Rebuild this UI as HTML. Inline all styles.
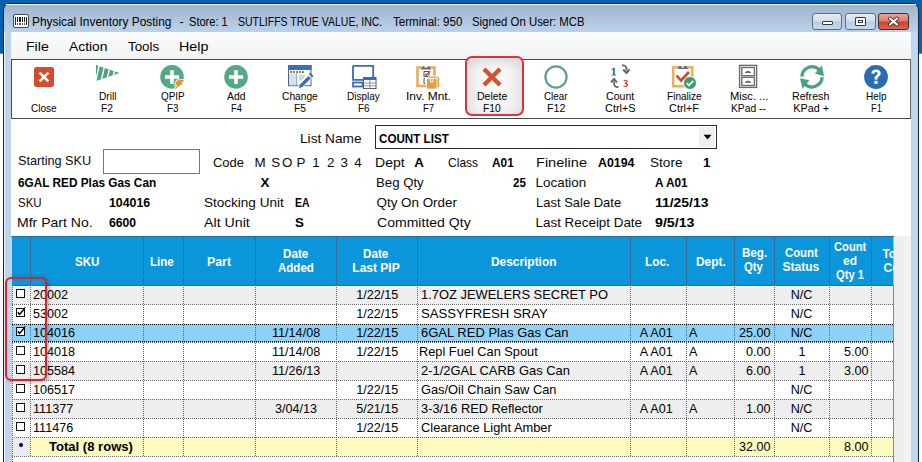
<!DOCTYPE html>
<html><head><meta charset="utf-8">
<style>
*{margin:0;padding:0;box-sizing:border-box}
html,body{width:922px;height:462px;overflow:hidden;background:#fff;font-family:"Liberation Sans",sans-serif;position:relative}
div,svg{position:absolute}
.t{white-space:pre;line-height:1;color:#000}
.cb{width:9px;height:9px;border:1px solid #111;background:#fff}
.vd{width:1px;background:repeating-linear-gradient(to bottom,#666 0 1px,transparent 1px 2px)}
.hd{height:1px;background:repeating-linear-gradient(to right,#666 0 1px,transparent 1px 2px)}
.hs{width:1px;top:237px;height:48px;background:#3b6d8c}
</style></head><body>
<!-- desktop -->
<div style="left:0;top:0;width:922px;height:54px;background:linear-gradient(to bottom,#0c5fac 0,#0c5fac 53px,#5f93c8 53px)"></div>
<!-- window frame -->
<div style="left:3px;top:3px;width:916px;height:470px;border:1px solid #1c2633;border-radius:7px 7px 0 0;background:linear-gradient(to bottom,#a2b5cc 0,#a9bfd8 10px,#b4cae3 20px,#bad1ea 28px,#bed3ea 60px,#bfd3ea 100%)"></div>
<div style="left:6px;top:4px;width:910px;height:1px;background:#eaf4f8"></div>
<div style="left:4px;top:32px;width:1px;height:440px;background:#eef4fb"></div>
<div style="left:911px;top:32px;width:7px;height:440px;background:linear-gradient(to right,#bcd2ea,#c2dcf2 60%,#9fd8f4)"></div>
<!-- title icon -->
<svg style="left:13px;top:14px" width="16" height="14" viewBox="0 0 16 14" shape-rendering="crispEdges">
 <rect x="0.5" y="0.5" width="15" height="13" rx="1.5" fill="#fff" stroke="#4a4a4a" stroke-width="1" shape-rendering="auto"/>
 <rect x="2" y="3" width="1" height="8" fill="#222"/>
 <rect x="4" y="3" width="1" height="5" fill="#222"/>
 <rect x="6" y="3" width="2" height="5" fill="#222"/>
 <rect x="9" y="3" width="1" height="5" fill="#222"/>
 <rect x="11" y="3" width="1" height="5" fill="#222"/>
 <rect x="13" y="3" width="1" height="8" fill="#222"/>
 <rect x="4" y="9" width="1" height="2" fill="#555"/>
 <rect x="6" y="9" width="2" height="2" fill="#555"/>
 <rect x="9" y="9" width="1" height="2" fill="#555"/>
 <rect x="11" y="9" width="1" height="2" fill="#555"/>
</svg>
<!-- caption buttons -->
<div style="left:812px;top:13px;width:30px;height:17px;border:1px solid #5e6e82;border-radius:3px;background:linear-gradient(to bottom,#e4ecf5 0,#d2dfed 45%,#b9cde2 55%,#c9d9ea 100%)"></div>
<div style="left:822px;top:21px;width:11px;height:4px;border:1px solid #303a46;background:#fff;border-radius:1px"></div>
<div style="left:845px;top:13px;width:31px;height:17px;border:1px solid #5e6e82;border-radius:3px;background:linear-gradient(to bottom,#e4ecf5 0,#d2dfed 45%,#b9cde2 55%,#c9d9ea 100%)"></div>
<div style="left:855px;top:17px;width:11px;height:9px;border:1px solid #303a46;background:#fff;border-radius:1px"></div>
<div style="left:858px;top:20px;width:5px;height:3px;border:1px solid #303a46"></div>
<div style="left:878px;top:13px;width:31px;height:17px;border:1px solid #4a2a24;border-radius:3px;background:linear-gradient(to bottom,#eba496 0,#de7d6c 45%,#c9452f 55%,#d66a52 100%)"></div>
<svg style="left:886px;top:15px" width="15" height="13" viewBox="0 0 15 13">
 <path d="M4 3.5L11 9.5M11 3.5L4 9.5" stroke="#4a2a22" stroke-width="3.8" stroke-linecap="round"/>
 <path d="M4 3.5L11 9.5M11 3.5L4 9.5" stroke="#fff" stroke-width="2.2" stroke-linecap="round"/>
</svg>
<!-- content -->
<div style="left:11px;top:32px;width:900px;height:440px;background:#fff"></div>
<!-- menubar -->
<div style="left:11px;top:32px;width:900px;height:27px;background:linear-gradient(to bottom,#fbfcfd 0,#f8f9fa 8px,#f3f3f4 100%)"></div>
<!-- toolbar -->
<div style="left:11px;top:59px;width:900px;height:60px;border:1px solid #4a4a4a;border-right-color:#6a6a6a;background:#fff"></div>
<!-- delete highlight -->
<div style="left:465px;top:56px;width:59px;height:60px;border:2px solid #e1303a;border-radius:7px;background:linear-gradient(to right,#e3e3e3 0,#f3f3f3 20%,#fafafa 50%,#f3f3f3 80%,#e2e2e2 100%)"></div>
<div style="left:467px;top:58px;width:55px;height:56px;border-radius:5px;background:linear-gradient(to bottom,rgba(195,195,195,.45) 0,rgba(255,255,255,0) 22%,rgba(255,255,255,0) 85%,rgba(210,210,210,.3) 100%)"></div>
<!-- Close -->
<svg style="left:32px;top:65px" width="24" height="24" viewBox="0 0 24 24">
 <rect x="2" y="2" width="20" height="20" rx="2.5" fill="#d74a2d"/>
 <path d="M7.6 7.6L16.4 16.4M16.4 7.6L7.6 16.4" stroke="#fff" stroke-width="2.6"/>
</svg>
<!-- Drill -->
<svg style="left:96px;top:64px" width="24" height="18" viewBox="0 0 24 18">
 <defs><clipPath id="dtri"><path d="M0 1L23.5 9L0 17z"/></clipPath></defs>
 <g clip-path="url(#dtri)">
  <rect x="0" y="0" width="24" height="18" fill="#4fa27f"/>
  <path d="M-0.5 18L3.5 0M5 18L9 0M10.5 18L14.5 0M16 18L20 0" stroke="#fff" stroke-width="1.5"/>
 </g>
</svg>
<!-- QPIP -->
<svg style="left:160px;top:65px" width="26" height="26" viewBox="0 0 26 26">
 <circle cx="12" cy="11.9" r="11.8" fill="#54a884"/>
 <path d="M5 12H19.2M12 5.2V18.9" stroke="#fff" stroke-width="3.6"/>
 <path d="M17 15.2L24.6 14.8L21 18L23.4 18L13.8 25L17.4 19.9L14.8 19.9z" fill="#fff" stroke="#fff" stroke-width="1.6" stroke-linejoin="round"/><path d="M17 15.2L24.6 14.8L21 18L23.4 18L13.8 25L17.4 19.9L14.8 19.9z" fill="#ea9428"/>
</svg>
<!-- Add -->
<svg style="left:224px;top:65px" width="24" height="24" viewBox="0 0 24 24">
 <circle cx="12" cy="11.9" r="11.8" fill="#54a884"/>
 <path d="M5 12H19.2M12 5.2V18.9" stroke="#fff" stroke-width="3.6"/>
</svg>
<!-- Change -->
<svg style="left:288px;top:64px" width="26" height="26" viewBox="0 0 26 26">
 <rect x="0.5" y="1.5" width="22.5" height="20.2" fill="#fff" stroke="#606060" stroke-width="1"/>
 <rect x="0" y="1" width="23.5" height="5" fill="#3d6fb5"/>
 <path d="M2 8h2M5 8h2M8 8h2M11 8h2M14 8h2" stroke="#555" stroke-width="1.3"/>
 <rect x="1" y="9.5" width="7.5" height="11.7" fill="#cde2f7"/>
 <path d="M8.7 9.5V21.2" stroke="#8a8a8a" stroke-width="0.8"/>
 <path d="M11 11.8h6M11 13.8h5M11 15.8h3" stroke="#9a9a9a" stroke-width="0.8"/>
 <path d="M10.2 24.6L11 20.9L20.3 11.6L23.2 14.5L13.9 23.8z" fill="#3d6fb5" stroke="#fff" stroke-width="0.9" stroke-linejoin="round"/>
 <path d="M21.3 9.9L22.2 9L25.1 11.9L24.2 12.8z" fill="#3d6fb5" stroke="#3d6fb5" stroke-width="1"/>
</svg>
<!-- Display -->
<svg style="left:352px;top:64px" width="26" height="26" viewBox="0 0 26 26">
 <path d="M1 1.8H21.2V13.5M11 15.8H1V1.8" fill="none" stroke="#3a6db3" stroke-width="1.8"/>
 <rect x="1" y="18.5" width="9.5" height="4" fill="none" stroke="#3a6db3" stroke-width="1.8"/>
 <rect x="11.5" y="13.5" width="12.5" height="11" fill="#fff" stroke="#5a5a5a" stroke-width="1"/>
 <rect x="11.5" y="13.5" width="12.5" height="2.5" fill="#3a6db3"/>
 <path d="M17.8 16V24.5M11.5 19h12.5M11.5 21.8h12.5" stroke="#8a8a8a" stroke-width="0.9"/>
</svg>
<!-- Inv Mnt -->
<svg style="left:414px;top:64px" width="28" height="26" viewBox="0 0 28 26">
 <rect x="3.5" y="3.5" width="17" height="18.5" fill="#fff" stroke="#e9ad5e" stroke-width="2.6"/>
 <path d="M7 5.5L8.5 2.5H15.5L17 5.5z" fill="#6b6b6b"/>
 <rect x="10.5" y="2" width="3" height="1.5" fill="#fff"/>
 <rect x="10" y="7.5" width="5" height="5" fill="none" stroke="#555" stroke-width="1"/>
 <path d="M11 10L12.5 11.5L16 7" fill="none" stroke="#c9472e" stroke-width="1.4"/>
 <path d="M11 14.5h-1v5h1" fill="none" stroke="#555" stroke-width="1"/>
 <path d="M12.5 14.5L15 12H25.5L23 14.5z" fill="#e6b45a" stroke="#fff" stroke-width="0.7"/>
 <path d="M23 14.5L25.5 12V22.5L23 25z" fill="#d99a3a" stroke="#fff" stroke-width="0.7"/>
 <rect x="12.5" y="14.5" width="10.5" height="10.5" fill="#dca24a" stroke="#fff" stroke-width="0.7"/>
 <path d="M16.5 14.5V18H19V14.5" fill="none" stroke="#fff" stroke-width="0.9"/>
</svg>
<!-- Delete -->
<svg style="left:480px;top:65px" width="24" height="24" viewBox="0 0 24 24">
 <path d="M4 4L20 20M20 4L4 20" stroke="#d5502f" stroke-width="4.4"/>
</svg>
<!-- Clear -->
<svg style="left:544px;top:65px" width="24" height="24" viewBox="0 0 24 24">
 <circle cx="12" cy="12" r="10.6" fill="none" stroke="#5ea086" stroke-width="2.2"/>
</svg>
<!-- Count -->
<svg style="left:606px;top:63px" width="28" height="28" viewBox="0 0 28 28">
 <path d="M5.5 6.2L7.6 4.8H8.8V11.5H10.2V12.5H5.5V11.5H7V6.3L5.6 7.2z" fill="#2d6db5"/>
 <path d="M17.4 17.5C18.2 16.4 21.6 16.4 21.7 18.6C21.7 19.6 21 20 20.5 20.1C21.2 20.3 22 20.9 22 21.9C22 24 18.6 24.6 17.2 23.3L17.7 22.4C18.8 23.2 20.4 23 20.4 21.9C20.4 21 19.5 20.7 18.6 20.7V19.6C19.5 19.6 20.2 19.3 20.2 18.6C20.2 17.6 18.8 17.5 17.9 18.3z" fill="#d74a30"/>
 <path d="M16 2.5C18.5 2 21 3 20.5 7.5" fill="none" stroke="#666" stroke-width="1.8"/>
 <path d="M17.2 6.5L20.5 10L23.5 6.5" fill="none" stroke="#666" stroke-width="2"/>
 <path d="M12.5 24C9.8 24.3 7.6 23 8 18.5" fill="none" stroke="#666" stroke-width="1.8"/>
 <path d="M5 19.5L8 16L11 19.5" fill="none" stroke="#666" stroke-width="2"/>
</svg>
<!-- Finalize -->
<svg style="left:670px;top:64px" width="28" height="28" viewBox="0 0 28 28">
 <rect x="3.2" y="3.2" width="19" height="19" fill="#fff" stroke="#e9b063" stroke-width="2.6"/>
 <path d="M7.5 5L9 2H16.5L18 5z" fill="#6d6d6d"/>
 <rect x="11.5" y="2.2" width="2.5" height="1.3" fill="#fff"/>
 <path d="M6.5 11.5L11 16.5L19 8" fill="none" stroke="#c9472e" stroke-width="2.6"/>
 <circle cx="20" cy="19" r="6.5" fill="#3f9b73" stroke="#fff" stroke-width="1"/>
 <path d="M16.8 19.2L19 21.3L23.2 17" fill="none" stroke="#fff" stroke-width="1.8"/>
</svg>
<!-- Misc -->
<svg style="left:736px;top:64px" width="24" height="26" viewBox="0 0 24 26">
 <rect x="3.6" y="1.4" width="17" height="22" fill="#fff" stroke="#6b6b6b" stroke-width="1.4"/>
 <rect x="5.8" y="3.5" width="12.6" height="8.2" fill="#fff" stroke="#6b6b6b" stroke-width="1.3"/>
 <rect x="5.8" y="13.3" width="12.6" height="8.2" fill="#fff" stroke="#6b6b6b" stroke-width="1.3"/>
 <path d="M9.5 8.5Q12 6 14.8 8.5z M9.5 18.3Q12 15.8 14.8 18.3z" fill="#4a5b70" stroke="#4a5b70" stroke-width="0.8"/>
</svg>
<!-- Refresh -->
<svg style="left:798px;top:63px" width="28" height="28" viewBox="0 0 28 28">
 <path d="M3.9 13.6A10.1 10.1 0 0 1 21.2 6.8" fill="none" stroke="#4aa37e" stroke-width="3.3"/>
 <path d="M24 2.2L26 13.2L16.8 10.6z" fill="#4aa37e"/>
 <path d="M24.1 14.2A10.1 10.1 0 0 1 6.6 20.6" fill="none" stroke="#4aa37e" stroke-width="3.3"/>
 <path d="M2 15.2L11.5 17.2L4.5 25.8z" fill="#4aa37e"/>
</svg>
<!-- Help -->
<svg style="left:864px;top:65px" width="24" height="24" viewBox="0 0 24 24">
 <circle cx="12" cy="12" r="11.9" fill="#2a6db5"/>
 <path d="M7.4 8.6C7.4 5.7 9.5 4.4 12.1 4.4C14.9 4.4 16.7 6 16.7 8.2C16.7 10.9 13.7 11.3 13.5 13.6V14.4H10.6V13.3C10.7 10.2 13.6 9.9 13.6 8.4C13.6 7.5 13 6.9 12 6.9C11 6.9 10.4 7.6 10.4 8.8z" fill="#fff"/>
 <rect x="10.5" y="15.9" width="3.1" height="3" fill="#fff"/>
</svg>

<!-- form controls -->
<div style="left:103px;top:149px;width:97px;height:25px;border:1px solid #777;background:#fff"></div>
<div style="left:375px;top:125px;width:342px;height:24px;border:1px solid #2c2c2c;background:#fff"></div>
<div style="left:699px;top:127px;width:16px;height:20px;background:#efefef"></div>
<svg style="left:703px;top:134px" width="10" height="6" viewBox="0 0 10 6"><path d="M0.6 0.8h8l-4 4.6z" fill="#000"/></svg>
<div style="left:894px;top:236px;width:17px;height:226px;background:linear-gradient(to right,#ededed 0,#eeeeee 10px,#f3f3f3 10px)"></div>
<div style="left:12px;top:236px;width:882px;height:50px;background:#0b96db;border-top:1px solid #2f6b90"></div>
<div style="left:11px;top:236px;width:1px;height:1px;background:#2f6b90"></div>
<div class="hs" style="left:30px"></div>
<div class="hs" style="left:143px"></div>
<div class="hs" style="left:183px"></div>
<div class="hs" style="left:255px"></div>
<div class="hs" style="left:336px"></div>
<div class="hs" style="left:417px"></div>
<div class="hs" style="left:630px"></div>
<div class="hs" style="left:686px"></div>
<div class="hs" style="left:734px"></div>
<div class="hs" style="left:774px"></div>
<div class="hs" style="left:829px"></div>
<div class="hs" style="left:871px"></div>
<div style="left:11px;top:285px;width:883px;height:19px;background:#eeeeee"></div>
<div style="left:11px;top:304px;width:883px;height:19px;background:#ffffff"></div>
<div style="left:11px;top:324px;width:883px;height:18px;background:#8fd2f8"></div>
<div style="left:11px;top:342px;width:883px;height:19px;background:#ffffff"></div>
<div style="left:11px;top:361px;width:883px;height:19px;background:#eeeeee"></div>
<div style="left:11px;top:380px;width:883px;height:19px;background:#ffffff"></div>
<div style="left:11px;top:399px;width:883px;height:19px;background:#eeeeee"></div>
<div style="left:11px;top:418px;width:883px;height:19px;background:#ffffff"></div>
<div style="left:11px;top:437px;width:19px;height:19px;background:#ebebef"></div>
<div style="left:30px;top:437px;width:864px;height:19px;background:#fbfbc1"></div>
<div style="left:11px;top:237px;width:1px;height:225px;background:#c6d4e3"></div>
<div class="vd" style="left:12px;top:285px;height:177px"></div>
<div style="left:12px;top:285px;width:882px;height:1px;background:#2b6f95"></div>
<div style="left:12px;top:286px;width:882px;height:1px;background:#f4fafd"></div>
<div class="hd" style="left:12px;top:304px;width:882px"></div>
<div class="hd" style="left:12px;top:342px;width:882px"></div>
<div class="hd" style="left:12px;top:361px;width:882px"></div>
<div class="hd" style="left:12px;top:380px;width:882px"></div>
<div class="hd" style="left:12px;top:399px;width:882px"></div>
<div class="hd" style="left:12px;top:418px;width:882px"></div>
<div class="hd" style="left:12px;top:437px;width:882px"></div>
<div class="hd" style="left:12px;top:456px;width:882px"></div>
<div class="hd" style="left:12px;top:324px;width:882px;background:repeating-linear-gradient(to right,#000 0 1px,transparent 1px 2px)"></div>
<div class="hd" style="left:12px;top:341px;width:882px;background:repeating-linear-gradient(to right,#000 0 1px,transparent 1px 2px)"></div>
<div class="vd" style="left:30px;top:285px;height:171px"></div>
<div class="vd" style="left:143px;top:285px;height:171px"></div>
<div class="vd" style="left:183px;top:285px;height:171px"></div>
<div class="vd" style="left:255px;top:285px;height:171px"></div>
<div class="vd" style="left:336px;top:285px;height:171px"></div>
<div class="vd" style="left:417px;top:285px;height:171px"></div>
<div class="vd" style="left:630px;top:285px;height:171px"></div>
<div class="vd" style="left:686px;top:285px;height:171px"></div>
<div class="vd" style="left:734px;top:285px;height:171px"></div>
<div class="vd" style="left:774px;top:285px;height:171px"></div>
<div class="vd" style="left:829px;top:285px;height:171px"></div>
<div class="vd" style="left:871px;top:285px;height:171px"></div>
<div class="cb" style="left:16px;top:289px"></div>
<div class="cb" style="left:16px;top:308px"></div>
<svg style="left:16px;top:307px" width="11" height="11" viewBox="0 0 11 11"><path d="M1.8 5.2L3.6 7.4L8.6 1.6" fill="none" stroke="#000" stroke-width="1.5"/><rect x="8.5" y="0" width="1" height="1" fill="#000"/></svg>
<div class="cb" style="left:16px;top:327px"></div>
<svg style="left:16px;top:326px" width="11" height="11" viewBox="0 0 11 11"><path d="M1.8 5.2L3.6 7.4L8.6 1.6" fill="none" stroke="#000" stroke-width="1.5"/><rect x="8.5" y="0" width="1" height="1" fill="#000"/></svg>
<div class="cb" style="left:16px;top:346px"></div>
<div class="cb" style="left:16px;top:365px"></div>
<div class="cb" style="left:16px;top:384px"></div>
<div class="cb" style="left:16px;top:403px"></div>
<div class="cb" style="left:16px;top:422px"></div>
<div style="left:19px;top:443px;width:4px;height:4px;border-radius:2px;background:#000"></div>
<div style="left:893px;top:237px;width:1px;height:48px;background:#7fc6ee"></div>
<div style="left:893px;top:285px;width:1px;height:177px;background:#8a8a8a"></div>
<div class="t" style="left:32.05px;top:16.02px;font-size:12.5px;transform:scaleX(0.9509);transform-origin:0 0;">Physical Inventory Posting</div>
<div class="t" style="left:179.50px;top:16.02px;font-size:12.5px;">-</div>
<div class="t" style="left:189.20px;top:16.02px;font-size:12.5px;transform:scaleX(0.8854);transform-origin:0 0;">Store: 1</div>
<div class="t" style="left:237.80px;top:16.02px;font-size:12.5px;transform:scaleX(0.8394);transform-origin:0 0;">SUTLIFFS TRUE VALUE, INC.</div>
<div class="t" style="left:393.00px;top:16.02px;font-size:12.5px;transform:scaleX(0.9243);transform-origin:0 0;">Terminal: 950</div>
<div class="t" style="left:472.20px;top:16.02px;font-size:12.5px;transform:scaleX(0.9106);transform-origin:0 0;">Signed On User: MCB</div>
<div class="t" style="left:25.71px;top:39.70px;font-size:13px;transform:scaleX(1.0853);transform-origin:0 0;">File</div>
<div class="t" style="left:69.20px;top:39.70px;font-size:13px;transform:scaleX(1.0640);transform-origin:0 0;">Action</div>
<div class="t" style="left:128.00px;top:39.70px;font-size:13px;transform:scaleX(1.0244);transform-origin:0 0;">Tools</div>
<div class="t" style="left:178.90px;top:39.70px;font-size:13px;transform:scaleX(1.0978);transform-origin:0 0;">Help</div>
<div class="t" style="left:31.30px;top:102.86px;font-size:10.8px;transform:scaleX(0.9276);transform-origin:0 0;">Close</div>
<div class="t" style="left:98.50px;top:91.36px;font-size:10.8px;transform:scaleX(0.9346);transform-origin:0 0;">Drill</div>
<div class="t" style="left:101.00px;top:102.86px;font-size:10.8px;transform:scaleX(0.9527);transform-origin:0 0;">F2</div>
<div class="t" style="left:160.95px;top:91.36px;font-size:10.8px;transform:scaleX(0.9180);transform-origin:0 0;">QPIP</div>
<div class="t" style="left:166.95px;top:102.86px;font-size:10.8px;transform:scaleX(0.9130);transform-origin:0 0;">F3</div>
<div class="t" style="left:226.80px;top:91.36px;font-size:10.8px;transform:scaleX(0.9580);transform-origin:0 0;">Add</div>
<div class="t" style="left:230.55px;top:102.86px;font-size:10.8px;transform:scaleX(0.8654);transform-origin:0 0;">F4</div>
<div class="t" style="left:282.10px;top:91.36px;font-size:10.8px;transform:scaleX(0.9467);transform-origin:0 0;">Change</div>
<div class="t" style="left:294.00px;top:102.86px;font-size:10.8px;transform:scaleX(0.9527);transform-origin:0 0;">F5</div>
<div class="t" style="left:346.90px;top:91.36px;font-size:10.8px;transform:scaleX(0.9222);transform-origin:0 0;">Display</div>
<div class="t" style="left:357.75px;top:102.86px;font-size:10.8px;transform:scaleX(0.9130);transform-origin:0 0;">F6</div>
<div class="t" style="left:405.69px;top:91.36px;font-size:10.8px;transform:scaleX(1.1061);transform-origin:0 0;">Inv. Mnt.</div>
<div class="t" style="left:423.20px;top:102.86px;font-size:10.8px;transform:scaleX(0.8734);transform-origin:0 0;">F7</div>
<div class="t" style="left:476.75px;top:91.36px;font-size:10.8px;transform:scaleX(0.9710);transform-origin:0 0;">Delete</div>
<div class="t" style="left:483.00px;top:102.86px;font-size:10.8px;transform:scaleX(0.9570);transform-origin:0 0;">F10</div>
<div class="t" style="left:544.05px;top:91.36px;font-size:10.8px;transform:scaleX(0.9120);transform-origin:0 0;">Clear</div>
<div class="t" style="left:546.80px;top:102.86px;font-size:10.8px;transform:scaleX(0.9893);transform-origin:0 0;">F12</div>
<div class="t" style="left:605.90px;top:91.36px;font-size:10.8px;transform:scaleX(0.9788);transform-origin:0 0;">Count</div>
<div class="t" style="left:604.80px;top:102.86px;font-size:10.8px;transform:scaleX(1.0101);transform-origin:0 0;">Ctrl+S</div>
<div class="t" style="left:666.65px;top:91.36px;font-size:10.8px;transform:scaleX(0.9328);transform-origin:0 0;">Finalize</div>
<div class="t" style="left:668.80px;top:102.86px;font-size:10.8px;transform:scaleX(1.0101);transform-origin:0 0;">Ctrl+F</div>
<div class="t" style="left:729.60px;top:91.36px;font-size:10.8px;transform:scaleX(1.0326);transform-origin:0 0;">Misc. ...</div>
<div class="t" style="left:731.20px;top:102.86px;font-size:10.8px;transform:scaleX(0.9512);transform-origin:0 0;">KPad --</div>
<div class="t" style="left:792.35px;top:91.36px;font-size:10.8px;transform:scaleX(0.9868);transform-origin:0 0;">Refresh</div>
<div class="t" style="left:793.30px;top:102.86px;font-size:10.8px;">KPad +</div>
<div class="t" style="left:865.70px;top:91.36px;font-size:10.8px;transform:scaleX(0.9279);transform-origin:0 0;">Help</div>
<div class="t" style="left:870.60px;top:102.86px;font-size:10.8px;transform:scaleX(0.8575);transform-origin:0 0;">F1</div>
<div class="t" style="left:299.58px;top:131.96px;font-size:13.4px;transform:scaleX(1.0199);transform-origin:0 0;color:#0a0a0a;">List Name</div>
<div class="t" style="left:378.70px;top:131.56px;font-size:13.4px;font-weight:bold;transform:scaleX(0.8687);transform-origin:0 0;">COUNT LIST</div>
<div class="t" style="left:18.20px;top:154.26px;font-size:13.4px;transform:scaleX(0.9449);transform-origin:0 0;color:#0a0a0a;">Starting SKU</div>
<div class="t" style="left:18.20px;top:176.06px;font-size:13.4px;font-weight:bold;transform:scaleX(0.8812);transform-origin:0 0;">6GAL RED Plas Gas Can</div>
<div class="t" style="left:18.20px;top:196.16px;font-size:13.4px;transform:scaleX(0.8562);transform-origin:0 0;color:#0a0a0a;">SKU</div>
<div class="t" style="left:108.70px;top:196.16px;font-size:13.4px;font-weight:bold;transform:scaleX(0.9223);transform-origin:0 0;">104016</div>
<div class="t" style="left:17.15px;top:216.06px;font-size:13.4px;transform:scaleX(1.0475);transform-origin:0 0;color:#0a0a0a;">Mfr Part No.</div>
<div class="t" style="left:108.70px;top:216.06px;font-size:13.4px;font-weight:bold;transform:scaleX(0.9100);transform-origin:0 0;">6600</div>
<div class="t" style="left:212.70px;top:156.16px;font-size:13.4px;transform:scaleX(0.9694);transform-origin:0 0;color:#0a0a0a;">Code</div>
<div class="t" style="left:254.60px;top:156.16px;font-size:13.4px;color:#0a0a0a;">M</div>
<div class="t" style="left:271.30px;top:156.16px;font-size:13.4px;color:#0a0a0a;">S</div>
<div class="t" style="left:282.00px;top:156.16px;font-size:13.4px;color:#0a0a0a;">O</div>
<div class="t" style="left:296.60px;top:156.16px;font-size:13.4px;color:#0a0a0a;">P</div>
<div class="t" style="left:312.20px;top:156.16px;font-size:13.4px;color:#0a0a0a;">1</div>
<div class="t" style="left:326.90px;top:156.16px;font-size:13.4px;color:#0a0a0a;">2</div>
<div class="t" style="left:340.60px;top:156.16px;font-size:13.4px;color:#0a0a0a;">3</div>
<div class="t" style="left:354.20px;top:156.16px;font-size:13.4px;color:#0a0a0a;">4</div>
<div class="t" style="left:260.50px;top:176.06px;font-size:13.4px;font-weight:bold;">X</div>
<div class="t" style="left:204.30px;top:196.16px;font-size:13.4px;transform:scaleX(1.0105);transform-origin:0 0;color:#0a0a0a;">Stocking Unit</div>
<div class="t" style="left:295.00px;top:196.16px;font-size:13.4px;font-weight:bold;transform:scaleX(0.7765);transform-origin:0 0;">EA</div>
<div class="t" style="left:204.30px;top:216.06px;font-size:13.4px;transform:scaleX(1.0612);transform-origin:0 0;color:#0a0a0a;">Alt Unit</div>
<div class="t" style="left:295.00px;top:216.06px;font-size:13.4px;font-weight:bold;">S</div>
<div class="t" style="left:375.45px;top:156.16px;font-size:13.4px;transform:scaleX(1.0484);transform-origin:0 0;color:#0a0a0a;">Dept</div>
<div class="t" style="left:414.20px;top:156.16px;font-size:13.4px;font-weight:bold;">A</div>
<div class="t" style="left:448.40px;top:156.16px;font-size:13.4px;transform:scaleX(0.8997);transform-origin:0 0;color:#0a0a0a;">Class</div>
<div class="t" style="left:492.00px;top:156.16px;font-size:13.4px;font-weight:bold;transform:scaleX(0.8838);transform-origin:0 0;">A01</div>
<div class="t" style="left:535.51px;top:156.16px;font-size:13.4px;transform:scaleX(1.0870);transform-origin:0 0;color:#0a0a0a;">Fineline</div>
<div class="t" style="left:598.00px;top:156.16px;font-size:13.4px;font-weight:bold;transform:scaleX(0.9247);transform-origin:0 0;">A0194</div>
<div class="t" style="left:650.10px;top:156.16px;font-size:13.4px;transform:scaleX(1.0140);transform-origin:0 0;color:#0a0a0a;">Store</div>
<div class="t" style="left:703.10px;top:156.16px;font-size:13.4px;font-weight:bold;">1</div>
<div class="t" style="left:375.51px;top:176.06px;font-size:13.4px;transform:scaleX(0.9857);transform-origin:0 0;color:#0a0a0a;">Beg Qty</div>
<div class="t" style="left:513.40px;top:176.06px;font-size:13.4px;font-weight:bold;transform:scaleX(0.8610);transform-origin:0 0;">25</div>
<div class="t" style="left:535.60px;top:176.06px;font-size:13.4px;color:#0a0a0a;">Location</div>
<div class="t" style="left:654.70px;top:176.06px;font-size:13.4px;font-weight:bold;transform:scaleX(0.8829);transform-origin:0 0;">A A01</div>
<div class="t" style="left:376.50px;top:196.16px;font-size:13.4px;color:#0a0a0a;">Qty On Order</div>
<div class="t" style="left:535.63px;top:196.16px;font-size:13.4px;transform:scaleX(0.9689);transform-origin:0 0;color:#0a0a0a;">Last Sale Date</div>
<div class="t" style="left:654.70px;top:196.16px;font-size:13.4px;font-weight:bold;transform:scaleX(1.0405);transform-origin:0 0;">11/25/13</div>
<div class="t" style="left:376.50px;top:216.06px;font-size:13.4px;transform:scaleX(1.0492);transform-origin:0 0;color:#0a0a0a;">Committed Qty</div>
<div class="t" style="left:535.60px;top:216.06px;font-size:13.4px;color:#0a0a0a;">Last Receipt Date</div>
<div class="t" style="left:654.70px;top:216.06px;font-size:13.4px;font-weight:bold;transform:scaleX(1.0603);transform-origin:0 0;">9/5/13</div>
<div class="t" style="left:74.50px;top:255.84px;font-size:12px;font-weight:bold;transform:scaleX(0.9647);transform-origin:0 0;color:#fff;">SKU</div>
<div class="t" style="left:150.35px;top:255.84px;font-size:12px;font-weight:bold;transform:scaleX(0.9562);transform-origin:0 0;color:#fff;">Line</div>
<div class="t" style="left:207.00px;top:255.84px;font-size:12px;font-weight:bold;transform:scaleX(1.0279);transform-origin:0 0;color:#fff;">Part</div>
<div class="t" style="left:282.50px;top:247.64px;font-size:12px;font-weight:bold;transform:scaleX(0.9721);transform-origin:0 0;color:#fff;">Date</div>
<div class="t" style="left:277.85px;top:261.94px;font-size:12px;font-weight:bold;transform:scaleX(0.9595);transform-origin:0 0;color:#fff;">Added</div>
<div class="t" style="left:363.20px;top:247.64px;font-size:12px;font-weight:bold;transform:scaleX(0.9721);transform-origin:0 0;color:#fff;">Date</div>
<div class="t" style="left:352.35px;top:261.94px;font-size:12px;font-weight:bold;color:#fff;">Last PIP</div>
<div class="t" style="left:491.35px;top:255.84px;font-size:12px;font-weight:bold;transform:scaleX(0.9911);transform-origin:0 0;color:#fff;">Description</div>
<div class="t" style="left:645.35px;top:255.84px;font-size:12px;font-weight:bold;transform:scaleX(0.9822);transform-origin:0 0;color:#fff;">Loc.</div>
<div class="t" style="left:695.50px;top:255.84px;font-size:12px;font-weight:bold;transform:scaleX(0.9910);transform-origin:0 0;color:#fff;">Dept.</div>
<div class="t" style="left:741.60px;top:247.34px;font-size:12px;font-weight:bold;transform:scaleX(0.9661);transform-origin:0 0;color:#fff;">Beg.</div>
<div class="t" style="left:744.45px;top:261.34px;font-size:12px;font-weight:bold;transform:scaleX(0.9395);transform-origin:0 0;color:#fff;">Qty</div>
<div class="t" style="left:784.55px;top:247.34px;font-size:12px;font-weight:bold;transform:scaleX(0.9436);transform-origin:0 0;color:#fff;">Count</div>
<div class="t" style="left:782.60px;top:261.34px;font-size:12px;font-weight:bold;color:#fff;">Status</div>
<div class="t" style="left:833.85px;top:240.94px;font-size:12px;font-weight:bold;transform:scaleX(0.9320);transform-origin:0 0;color:#fff;">Count</div>
<div class="t" style="left:843.00px;top:254.74px;font-size:12px;font-weight:bold;transform:scaleX(0.9946);transform-origin:0 0;color:#fff;">ed</div>
<div class="t" style="left:835.60px;top:268.54px;font-size:12px;font-weight:bold;transform:scaleX(0.9295);transform-origin:0 0;color:#fff;">Qty 1</div>
<div class="t" style="left:33.00px;top:288.73px;font-size:12.6px;">20002</div>
<div class="t" style="left:356.19px;top:288.73px;font-size:12.6px;">1/22/15</div>
<div class="t" style="left:420.50px;top:288.73px;font-size:12.6px;transform:scaleX(1.0248);transform-origin:0 0;">1.7OZ JEWELERS SECRET PO</div>
<div class="t" style="left:790.70px;top:288.73px;font-size:12.6px;">N/C</div>
<div class="t" style="left:33.00px;top:307.73px;font-size:12.6px;">53002</div>
<div class="t" style="left:356.19px;top:307.73px;font-size:12.6px;">1/22/15</div>
<div class="t" style="left:420.50px;top:307.73px;font-size:12.6px;transform:scaleX(1.0422);transform-origin:0 0;">SASSYFRESH SRAY</div>
<div class="t" style="left:790.70px;top:307.73px;font-size:12.6px;">N/C</div>
<div class="t" style="left:33.00px;top:326.73px;font-size:12.6px;">104016</div>
<div class="t" style="left:272.06px;top:326.73px;font-size:12.6px;">11/14/08</div>
<div class="t" style="left:356.19px;top:326.73px;font-size:12.6px;">1/22/15</div>
<div class="t" style="left:420.50px;top:326.73px;font-size:12.6px;transform:scaleX(1.0315);transform-origin:0 0;">6GAL RED Plas Gas Can</div>
<div class="t" style="left:639.80px;top:326.73px;font-size:12.6px;">A A01</div>
<div class="t" style="left:689.00px;top:326.73px;font-size:12.6px;">A</div>
<div class="t" style="left:738.89px;top:326.73px;font-size:12.6px;">25.00</div>
<div class="t" style="left:790.70px;top:326.73px;font-size:12.6px;">N/C</div>
<div class="t" style="left:33.00px;top:345.73px;font-size:12.6px;">104018</div>
<div class="t" style="left:272.06px;top:345.73px;font-size:12.6px;">11/14/08</div>
<div class="t" style="left:356.19px;top:345.73px;font-size:12.6px;">1/22/15</div>
<div class="t" style="left:419.48px;top:345.73px;font-size:12.6px;transform:scaleX(1.0154);transform-origin:0 0;">Repl Fuel Can Spout</div>
<div class="t" style="left:639.80px;top:345.73px;font-size:12.6px;">A A01</div>
<div class="t" style="left:689.00px;top:345.73px;font-size:12.6px;">A</div>
<div class="t" style="left:745.89px;top:345.73px;font-size:12.6px;">0.00</div>
<div class="t" style="left:798.50px;top:345.73px;font-size:12.6px;">1</div>
<div class="t" style="left:843.99px;top:345.73px;font-size:12.6px;">5.00</div>
<div class="t" style="left:33.00px;top:364.73px;font-size:12.6px;">105584</div>
<div class="t" style="left:272.06px;top:364.73px;font-size:12.6px;">11/26/13</div>
<div class="t" style="left:420.50px;top:364.73px;font-size:12.6px;transform:scaleX(1.0262);transform-origin:0 0;">2-1/2GAL CARB Gas Can</div>
<div class="t" style="left:639.80px;top:364.73px;font-size:12.6px;">A A01</div>
<div class="t" style="left:689.00px;top:364.73px;font-size:12.6px;">A</div>
<div class="t" style="left:745.89px;top:364.73px;font-size:12.6px;">6.00</div>
<div class="t" style="left:798.50px;top:364.73px;font-size:12.6px;">1</div>
<div class="t" style="left:843.99px;top:364.73px;font-size:12.6px;">3.00</div>
<div class="t" style="left:33.00px;top:383.73px;font-size:12.6px;">106517</div>
<div class="t" style="left:356.19px;top:383.73px;font-size:12.6px;">1/22/15</div>
<div class="t" style="left:420.50px;top:383.73px;font-size:12.6px;transform:scaleX(1.0181);transform-origin:0 0;">Gas/Oil Chain Saw Can</div>
<div class="t" style="left:790.70px;top:383.73px;font-size:12.6px;">N/C</div>
<div class="t" style="left:33.00px;top:402.73px;font-size:12.6px;">111377</div>
<div class="t" style="left:275.09px;top:402.73px;font-size:12.6px;">3/04/13</div>
<div class="t" style="left:356.19px;top:402.73px;font-size:12.6px;">5/21/15</div>
<div class="t" style="left:420.50px;top:402.73px;font-size:12.6px;transform:scaleX(1.0184);transform-origin:0 0;">3-3/16 RED Reflector</div>
<div class="t" style="left:639.80px;top:402.73px;font-size:12.6px;">A A01</div>
<div class="t" style="left:689.00px;top:402.73px;font-size:12.6px;">A</div>
<div class="t" style="left:745.89px;top:402.73px;font-size:12.6px;">1.00</div>
<div class="t" style="left:790.70px;top:402.73px;font-size:12.6px;">N/C</div>
<div class="t" style="left:33.00px;top:421.73px;font-size:12.6px;">111476</div>
<div class="t" style="left:356.19px;top:421.73px;font-size:12.6px;">1/22/15</div>
<div class="t" style="left:420.50px;top:421.73px;font-size:12.6px;transform:scaleX(1.0209);transform-origin:0 0;">Clearance Light Amber</div>
<div class="t" style="left:790.70px;top:421.73px;font-size:12.6px;">N/C</div>
<div class="t" style="left:48.50px;top:440.73px;font-size:12.6px;font-weight:bold;transform:scaleX(1.0367);transform-origin:0 0;">Total (8 rows)</div>
<div class="t" style="left:738.89px;top:440.73px;font-size:12.6px;">32.00</div>
<div class="t" style="left:843.99px;top:440.73px;font-size:12.6px;">8.00</div>
<div style="left:0;top:0;width:894px;height:462px;overflow:hidden"><div class="t" style="left:882.40px;top:247.94px;font-size:12px;font-weight:bold;color:#fff;">To</div>
<div class="t" style="left:883.60px;top:261.94px;font-size:12px;font-weight:bold;color:#fff;">Co</div></div>
<div style="left:5px;top:277px;width:42px;height:104px;border:2px solid #d3262f;border-radius:6px;box-shadow:2px 1px 4px rgba(0,0,0,.28), inset 0 0 1px rgba(180,20,30,.6)"></div>

</body></html>
